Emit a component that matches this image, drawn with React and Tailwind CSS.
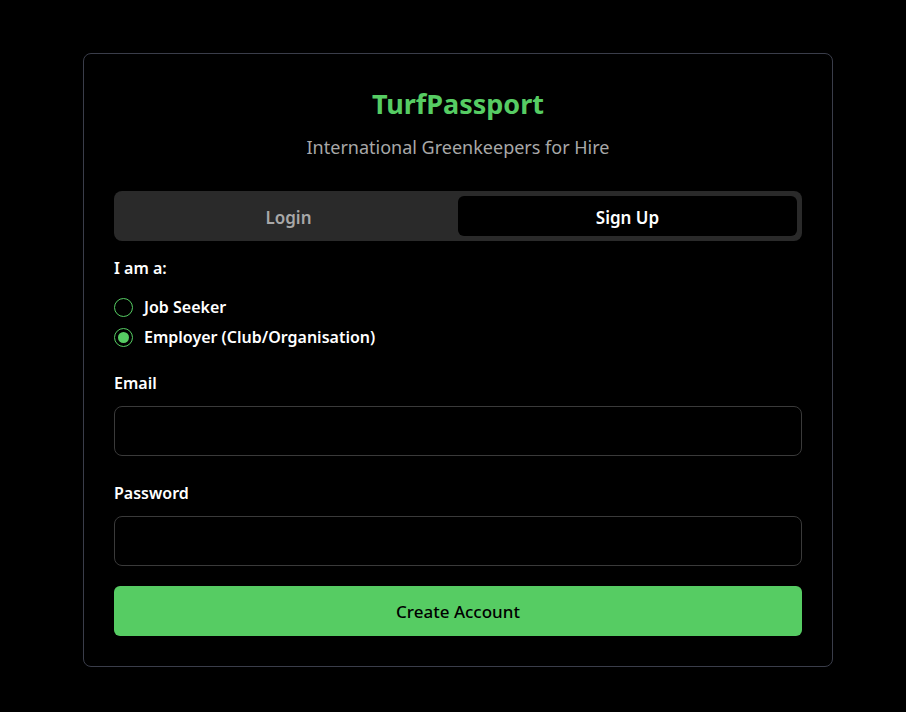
import React, { useState } from "react";

export default function App() {
  const [role, setRole] = useState("employer");
  return (
    <div
      className="min-h-[712px] w-full bg-black flex justify-center pt-[53px] pl-[10px]"
      style={{ fontFamily: '"Noto Sans", "Open Sans", sans-serif' }}
    >
      <div className="w-[750px] h-[614px] border border-[#3a3d4a] rounded-[8px] px-[30px] pt-[30px] pb-[30px] flex flex-col">
        <h1 className="text-center text-[27px] leading-[40px] font-bold text-[#56cc63]">TurfPassport</h1>
        <p className="text-center text-[18px] leading-[26px] text-[#a8a8a8] mt-[10px]">International Greenkeepers for Hire</p>

        <div className="mt-[31px] h-[50px] bg-[#2a2a2a] rounded-[8px] p-[5px] flex">
          <button className="flex-1 rounded-[6px] text-[17px] font-semibold text-[#a8a8a8] pt-[3px]">Login</button>
          <button className="flex-1 rounded-[6px] bg-black text-[17px] font-semibold text-white pt-[3px]">Sign Up</button>
        </div>

        <div className="mt-[15px] text-[16px] leading-[24px] font-semibold text-white">I am a:</div>
        <div className="mt-[15px] flex flex-col gap-[6px]">
          {[
            ["seeker", "Job Seeker"],
            ["employer", "Employer (Club/Organisation)"],
          ].map(([k, label]) => (
            <label key={k} className="flex items-center gap-[11px] h-[24px] cursor-pointer" onClick={() => setRole(k)}>
              <span className="w-[19px] h-[19px] rounded-full border border-[#56cc63] flex items-center justify-center">
                {role === k && <span className="w-[11px] h-[11px] rounded-full bg-[#56cc63]" />}
              </span>
              <span className="text-[16px] font-semibold text-white">{label}</span>
            </label>
          ))}
        </div>

        <div className="mt-[22px] text-[16px] leading-[24px] font-semibold text-white">Email</div>
        <input className="mt-[11px] h-[50px] w-full rounded-[8px] border border-[#3a3a3a] bg-black outline-none px-3 text-white" />

        <div className="mt-[25px] text-[16px] leading-[24px] font-semibold text-white">Password</div>
        <input type="password" className="mt-[11px] h-[50px] w-full rounded-[8px] border border-[#3a3a3a] bg-black outline-none px-3 text-white" />

        <button className="mt-[20px] h-[50px] w-full rounded-[6px] bg-[#56cc63] text-[17px] font-medium text-black pt-[2px]">Create Account</button>
      </div>
    </div>
  );
}
